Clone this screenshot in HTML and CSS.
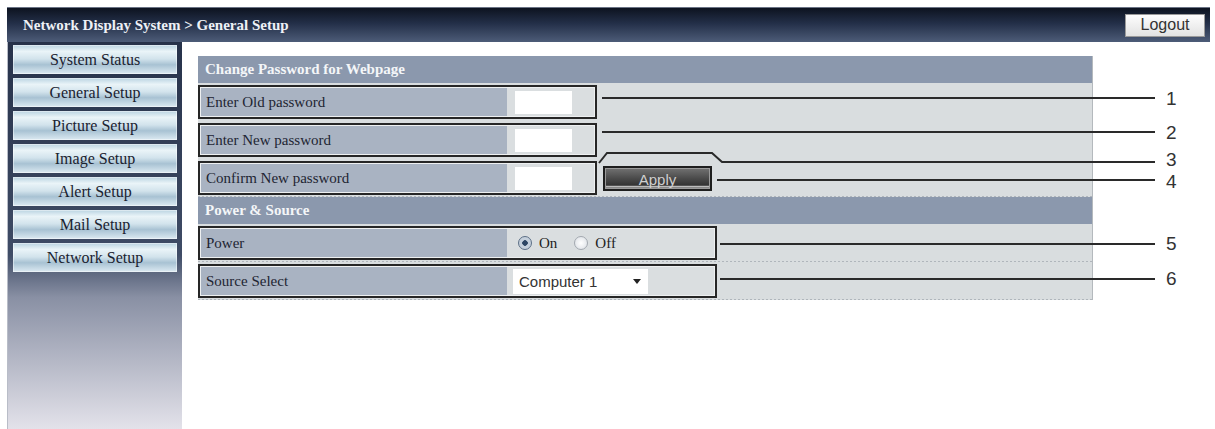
FILE: index.html
```html
<!DOCTYPE html>
<html lang="en">
<head>
    <meta charset="UTF-8">
    <title>Network Display System - General Setup</title>
    <link rel="stylesheet" href="styles.css">
</head>
<body>
<div class="page">
    <!--顶部标题栏-->
    <div class="topbar">
        <span class="crumb">Network Display System &gt; General Setup</span>
        <button class="logout">Logout</button>
    </div>
    <div class="layout">
        <!--左侧菜单-->
        <ul class="nav">
            <li>System Status</li>
            <li>General Setup</li>
            <li>Picture Setup</li>
            <li>Image Setup</li>
            <li>Alert Setup</li>
            <li>Mail Setup</li>
            <li>Network Setup</li>
        </ul>
        <div class="main">
            <div class="panel">
                <div class="panel-title">Change Password for Webpage</div>
                <div class="row">
                    <div class="field">
                        <div class="label">Enter Old password</div>
                        <div class="value"><span class="input"></span></div>
                    </div>
                </div>
                <div class="row">
                    <div class="field">
                        <div class="label">Enter New password</div>
                        <div class="value"><span class="input"></span></div>
                    </div>
                </div>
                <div class="row dotted">
                    <div class="field">
                        <div class="label">Confirm New password</div>
                        <div class="value"><span class="input"></span></div>
                    </div>
                    <button class="apply">Apply</button>
                </div>
                <div class="panel-title">Power &amp; Source</div>
                <div class="row dotted">
                    <div class="field wide">
                        <div class="label">Power</div>
                        <div class="value">
                            <span class="radio checked">On</span>
                            <span class="radio">Off</span>
                        </div>
                    </div>
                </div>
                <div class="row dotted">
                    <div class="field wide">
                        <div class="label">Source Select</div>
                        <div class="value"><span class="select">Computer 1</span></div>
                    </div>
                </div>
            </div>
        </div>
    </div>
    <!--标注线和编号-->
    <svg class="callouts" width="1215" height="429" viewBox="0 0 1215 429">
        <g fill="none" stroke="#2a2a2a" stroke-width="2">
            <path d="M602 98 H1155"/>
            <path d="M602 132 H1155"/>
            <path d="M599 163 L607 153 H712 L722 162 H1155"/>
            <path d="M717 180 H1155"/>
            <path d="M720 244 H1155"/>
            <path d="M720 279 H1155"/>
        </g>
        <g class="nums">
            <text x="1166" y="105">1</text>
            <text x="1166" y="139">2</text>
            <text x="1166" y="166">3</text>
            <text x="1166" y="188">4</text>
            <text x="1166" y="250">5</text>
            <text x="1166" y="285">6</text>
        </g>
    </svg>
</div>
</body>
</html>
```

FILE: styles.css
```css
* {
    margin: 0;
    padding: 0;
    box-sizing: border-box;
}
body {
    font-family: "Liberation Serif", "Times New Roman", serif;
    background: #fff;
}
.page {
    position: relative;
    width: 1215px;
    height: 429px;
    padding: 7px 5px 0 7px;
    overflow: hidden;
}
.topbar {
    display: flex;
    align-items: center;
    justify-content: space-between;
    height: 35px;
    padding: 0 5px 0 16px;
    background: linear-gradient(#0d1320, #232f48 45%, #4d5c78);
    border-top: 1px solid #6a7385;
}
.crumb {
    color: #eef1f6;
    font-size: 15px;
    font-weight: bold;
}
.logout {
    width: 80px;
    height: 23px;
    font: 16px "Liberation Sans", Arial, sans-serif;
    color: #333;
    background: linear-gradient(#fdfdfd, #e2e2e2);
    border: 1px solid #9a9a9a;
}
.layout {
    display: flex;
    height: 387px;
}
/*左侧菜单*/
.nav {
    display: flex;
    flex-direction: column;
    gap: 4px;
    width: 175px;
    padding: 3px 5px 0;
    list-style: none;
    background: linear-gradient(#27324a, #3f4c66 55%, #8990a4 66%, #e3e2ea);
    border-left: 1px solid #b9bdc8;
}
.nav li {
    height: 29px;
    line-height: 29px;
    text-align: center;
    font-size: 16px;
    color: #1a2230;
    background: linear-gradient(#b9d3e1, #eaf4f8 22%, #d2e3ec 48%, #a8c2d3 68%, #dceaf2);
    box-shadow: inset 0 0 0 1px rgba(255, 255, 255, .45);
}
.main {
    flex: 1;
    padding: 14px 0 0 16px;
}
.panel {
    width: 895px;
    background: #d9dddf;
    border-right: 1px solid #b4b9bd;
}
.panel-title {
    height: 27px;
    line-height: 27px;
    padding-left: 7px;
    background: #8b98ad;
    color: #f4f6f8;
    font-size: 15px;
    font-weight: bold;
}
.row {
    display: flex;
    align-items: center;
    padding: 2px 0;
}
.row.dotted {
    background: linear-gradient(to right, #b0b6bc 50%, transparent 50%) left bottom / 4px 1px repeat-x;
}
/*黑框：标签 + 输入*/
.field {
    display: flex;
    width: 399px;
    height: 34px;
    padding: 1px;
    border: 2px solid #262626;
    background: #eef0f1;
}
.field.wide {
    width: 519px;
}
.label {
    display: flex;
    align-items: center;
    width: 306px;
    padding-left: 5px;
    background: #a9b3c2;
    color: #1e2532;
    font-size: 15px;
}
.value {
    display: flex;
    align-items: center;
    flex: 1;
    padding-left: 8px;
    background: #dadee0;
}
.input {
    width: 57px;
    height: 23px;
    background: #fff;
}
.apply {
    width: 109px;
    height: 25px;
    margin-left: 6px;
    padding-top: 2px;
    border: 2px solid #1e1e1e;
    background: linear-gradient(#727272, #4a4a4a 50%, #333 82%, #bdbdbd 88%, #3a3a3a);
    box-shadow: inset 0 0 0 1px #9a9a9a;
    color: #cfcfcf;
    font: 15px "Liberation Sans", Arial, sans-serif;
}
.radio {
    display: inline-flex;
    align-items: center;
    gap: 7px;
    margin-left: 3px;
    margin-right: 14px;
    font-size: 15px;
    color: #222;
}
.radio::before {
    content: "";
    width: 12px;
    height: 12px;
    border-radius: 50%;
    border: 1px solid #a3a9b0;
    background: radial-gradient(#ffffff, #d9dde3);
}
.radio.checked::before {
    border-color: #5c6f86;
    background: radial-gradient(circle, #2d4664 0 2.5px, #c5d0dc 3px);
}
.select {
    display: flex;
    align-items: center;
    justify-content: space-between;
    width: 135px;
    height: 25px;
    margin-left: -2px;
    padding: 0 7px 0 6px;
    background: #fff;
    color: #333;
    font: 15px "Liberation Sans", Arial, sans-serif;
}
.select::after {
    content: "";
    border-left: 4px solid transparent;
    border-right: 4px solid transparent;
    border-top: 5px solid #222;
}
/*标注*/
.callouts {
    position: absolute;
    left: 0;
    top: 0;
    pointer-events: none;
}
.nums text {
    font: 19px "Liberation Sans", Arial, sans-serif;
    fill: #333;
}
```
